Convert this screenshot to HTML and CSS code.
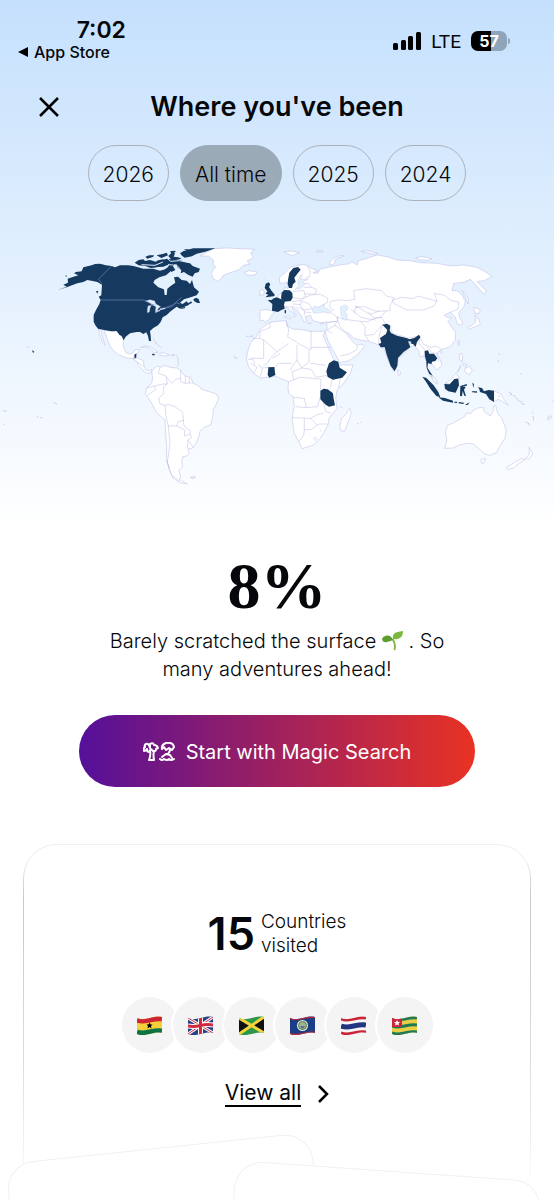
FILE: index.html
```
<!DOCTYPE html>
<html lang="en">
<head>
    <meta charset="UTF-8">
    <meta name="viewport" content="width=device-width, initial-scale=1.0">
    <title>Where you've been</title>
    <link rel="stylesheet" href="styles.css">
</head>
<body>
    <header class="hero">
        <div class="status-bar">
            <div class="status-left">
                <div class="clock">7:02</div>
                <a class="back-link" href="#">
                    <svg width="10" height="10" viewBox="0 0 10 10" aria-hidden="true"><path d="M10 0v10L0 5z"/></svg>
                    App Store
                </a>
            </div>
            <div class="status-right">
                <svg width="28" height="18" viewBox="0 0 28 18" aria-hidden="true">
                    <rect x="0" y="11" width="5" height="7" rx="1.5"/>
                    <rect x="8" y="8" width="5" height="10" rx="1.5"/>
                    <rect x="15" y="4" width="5" height="14" rx="1.5"/>
                    <rect x="23" y="0" width="5" height="18" rx="1.5"/>
                </svg>
                <span class="network">LTE</span>
                <span class="battery">57</span>
            </div>
        </div>

        <div class="title-bar">
            <button class="close" type="button" aria-label="Close">
                <svg width="20" height="20" viewBox="0 0 20 20" aria-hidden="true"><path d="M1 1l18 18M19 1L1 19"/></svg>
            </button>
            <h1>Where you've been</h1>
        </div>

        <nav class="years">
            <button class="chip" type="button">2026</button>
            <button class="chip active" type="button">All time</button>
            <button class="chip" type="button">2025</button>
            <button class="chip" type="button">2024</button>
        </nav>

        <svg class="map" viewBox="0 0 1662 810" role="img" aria-label="World map of visited countries">
            <!-- Americas -->
            <g class="land">
                <path d="M600 78L640 56 680 54 765 58 752 68 760 84 742 92 748 103 730 106 715 120 690 128 670 136 660 150 652 154 640 146 634 130 640 118 648 112 640 104 640 90 625 78z"/>
                <path d="M735 126l12-4 12 2 10 0 2 6-12 6-14 0-10-4z"/>
                <path d="M312 300L335 304 350 303 358 314 366 318 371 331 370 350 378 368 390 372 400 368 404 360 418 358 414 370 405 374 398 386 380 384 355 374 340 362 330 348 324 332z"/>
                <path d="M295 297l8 3 2 14 10 32-6-6-8-20z"/>
                <path d="M398 386L412 384 430 392 432 410 438 420 448 422 456 418 455 426 446 430 436 428 425 416 415 406 412 396z"/>
                <path d="M422 353l14-6 16 4 22 16-12 0-14-12-12-4zM480 369l14 0 14 6-12 3-16-2zM514 374h10v3h-10z"/>
                <path class="line" d="M530 376l4 10 0 8 1 8-3 8M412 396l18 14M458 325l10 10-2 8M470 340l14 14"/>
                <path d="M455 425L470 408 482 412 494 406 510 412 530 414 540 420 555 438 572 442 580 460 600 470 604 478 625 484 650 492 656 505 648 524 640 538 638 562 632 585 612 592 600 604 596 622 588 640 578 654 564 657 568 670 560 678 548 680 545 698 548 710 536 722 542 738 538 748 562 762 540 758 520 745 508 720 500 690 500 650 497 610 495 570 470 548 452 515 436 492 440 474 455 460 458 444z"/>
                <path class="line" d="M480 412l-5 18 23 8 4 24-12 8 2 20-16 14 4 18 15 4M440 474l22-6 6 10-26 18M495 526l3 34 7 28 25 0 5-13 15-4-2-24-23-17-17-6-13 2M530 588l25 12-2 18 17-6 0-10-18-14-2-18M505 588l5 52-8 58 13 37 25 20M562 656l2-26 16 22M542 420v35l13 5 25-2M556 438v22M568 442v18M498 440l17 20 12-12 15-3M570 612l5 10-11 8M500 690l8 24M462 468l28-6 12 0"/>
                <path class="faint" d="M572 742l8-2 6 2-8 4zM82 351l6 2M8 542l12 2M110 560l6 2M120 562l8 2M160 516l12 8M10 584l4 0M703 378l4 8 6-4M738 318l8 2M750 320l10-3"/>
            </g>
            <g class="visited">
                <path d="M170 181L200 170 190 164 204 158 203 146 216 142 235 136 222 130 228 126 245 124 250 112 275 106 285 102 300 101 318 106 335 108 345 112 360 106 385 106 400 108 414 112 430 116 460 116 480 122 495 118 505 110 510 95 525 100 518 112 512 124 498 136 478 142 464 150 460 158 475 172 492 178 494 195 500 195 502 176 512 168 526 158 522 142 534 140 545 150 560 152 570 162 576 150 582 172 597 185 590 196 572 202 552 208 540 218 548 222 560 214 568 224 550 232 540 236 530 230 520 238 512 244 500 255 488 262 482 276 474 286 460 294 450 303 452 318 453 333 447 333 444 318 439 307 430 312 420 306 410 306 390 310 377 320 371 331 365 318 358 314 350 303 335 304 312 300 294 296 286 286 281 275 281 255 288 240 298 222 302 210 296 200 304 196 306 164 292 156 278 153 262 150 250 156 232 160 200 172z"/>
                <path d="M528 96l18-4 14 6 10 2 8 8 22 8-4 10-12 4-6 10-14-6-12-8-10 4 2-10-12-8zM404 98l12-8 14-2 6 6 14-2 6 10 16 2-2 8-18 2-16-6-20-2zM436 80l12-4 14 0-2 4-18 6zM470 92l18-4 12 4-4 10-18 4-10-8zM470 76l18-4 12-4 4 8-20 8zM505 78l12-12 8 4-4 10 14 2 10 4-28 6zM510 64l14-2 4 4-14 4zM540 70l12-8 28-7 66 0-30 10-26 6-14 8-22 4-8-6zM552 58h20l-10 6zM506 108l14 2 6 10-12 6zM580 208l8-5 8 4 4 12-8 0-10-6zM560 222l14-8 2 5-14 6zM544 234l12-4-2 5-10 2zM288 184l7-2-3 9zM196 136l6 2-4 2zM96 360l7 5-4 4zM403 374l6-4 0 12-5 4zM456 371l8 1 0 4-7 0z"/>
                <path d="M420 96l30-6 20 6 30-10 40 4 20 10-20 4-30-2-20 8-30 2-26-6z"/>
            </g>
            <path class="water" d="M436 213l14-4 14 4 4 10-12 2-6-6zM444 228l10-2-4 8-2 12-6 2 0-8zM456 224l12-2 14 8-6 4-6 10-4-2 2-12zM466 244l14-5 0 3-14 6zM480 236l16-3 0 3-16 4z"/>
            <path class="channel" d="M425 104l40 2 24-10M500 84l12 10 26-2 20 4M504 104l26 2 10 10"/>
            <path class="border" d="M302 210H432L446 218 462 226M496 234L515 230 528 218 540 222M335 108L295 148 306 160M496 233L520 224 545 202"/>

            <!-- Europe, Africa, Asia, Oceania -->
            <g transform="translate(831 0)">
                <g class="land">
                    <path d="M18 238L28 230 38 240 52 252 50 262 58 256 46 238 48 230 66 248 74 258 80 276 90 272 84 260 100 256 108 272 130 278 150 276 150 300 145 308 152 330 165 355 178 378 188 398 215 392 240 375 262 350 255 342 245 344 238 346 225 332 210 314 205 305 218 312 230 325 250 330 275 334 298 342 310 348 322 358 335 395 350 425 362 400 365 385 390 362 398 350 412 346 425 362 430 382 442 376 448 395 452 420 468 440 480 458 472 455 455 428 450 410 453 398 465 402 480 420 495 405 488 385 478 370 495 358 520 350 535 330 536 308 520 285 512 275 525 264 510 262 502 256 520 246 535 262 540 280 550 285 558 280 548 262 545 248 560 232 565 215 555 195 540 182 525 182 530 160 560 157 580 148 590 158 605 175 622 194 628 182 610 165 600 155 620 152 645 140 625 125 600 112 560 105 520 108 480 100 430 98 400 92 360 90 330 80 300 75 270 85 245 92 240 105 225 95 215 102 200 103 160 110 130 117 122 130 108 128 124 122 100 114 95 108 80 104 60 106 40 112 20 132 7 142 8 158 20 160 30 155 34 174 30 176 24 170 20 182 5 196 0 215z"/>
                    <path d="M-51 241L-30 239-14 243-8 248-18 256-20 266-35 276-42 270-51 272z"/>
                    <path d="M-52 182l8-4 6 8-2 8-12 2z"/>
                    <path d="M-23 278L0 274 28 272 30 288 50 298 70 298 100 304 145 304 138 316 155 355 168 385 185 405 228 405 220 430 200 460 180 480 176 505 180 535 170 548 155 565 155 580 145 600 130 625 110 645 75 656 65 635 52 610 45 565 52 530 48 500 35 490 33 470 35 455 10 445-5 438-30 442-50 444-70 430-85 410-92 388-88 365-80 340-62 320-50 298z"/>
                    <path d="M218 535l5 14-14 40-6 14-11 0-4-16 6-22 12-12z"/>
                    <path d="M503 655L510 630 505 605 512 586 530 578 548 568 562 560 570 548 580 552 590 540 602 534 618 532 622 545 640 558 648 545 650 528 656 526 662 550 675 566 688 600 684 624 670 646 658 668 640 676 622 672 610 660 604 654 598 650 590 642 570 640 550 644 528 654z"/>
                    <path d="M612 688l14-2-5 12-8 2zM756 652l6 10 6 10-14 16-7-4 10-12zM688 712l26-16 20-10 12 2-20 12-16 14-18 4z"/>
                    <path d="M650 482l22 10 6 12 16 22-22-14-8-4-14 7zM504 460l18-12 14-18 12 14-16 4-12 14zM462 438l12 6 8 18-10-6zM548 372l7-2 2 14-2 12-7-8zM556 400l14 4-4 8zM562 418l16-10 8 14-8 12-12-6zM540 428l12-22-8 18z"/>
                    <path d="M590 232l8 2 12 6-4 10-12 0zM594 254l8 10 8 16-8 8-14 4-12 6-4-6 14-6 10-10zM555 182l12 12 8 16-2 12-8-20zM542 334l5-2-2 14zM362 420l8 4 0 10-6 2zM487 364l8-2-1 8z"/>
                    <path d="M20 66l22-3 26 5-22 9zM118 63h20v3h-20zM158 104q-2-20 36-28l8 2q-38 10-28 20l-6 6zM252 64l20-2 30 8-12 3zM415 84l20-4 30 6-12 5-28-2zM22 261l10 4 10 0-6-7zM90 280h14M128 282l14-3"/>
                    <path class="line" d="M92 108l8 18-2 14-14 5M60 106l10 12M48 185l32-4 6 18-14 8-24-4M80 162l14-2 10 12 14 6-2 14-34 0M80 172l24 0M74 209l26-14 30-2 22 12 0 12-26 14M72 214l22 6 12 16-26 4-10-12zM44 215l30-4M48 222l22 2M66 232l16 10 0 14M56 230l10 10M84 246l18 2M22 218l-4 8 14 6 16-2"/>
                    <path class="line" d="M172 242l-14-10 2-18 24-4 26 2 24-4-4-26 38-6 46 6 14 16 24 6-14 24 2 14-36 2-14-2-26-12-28 2-4 18M345 210l30-8 34 4 14-8 50 14 7 2-10 14-30 12-50 0-40-20zM480 214l-8-24 30 6 20 16 24 4-4 22-20 8M328 242l-16 18 14 22 14 8 6 20 48 14 34-6 10 24 24 10 14-4 19 10M180 262l24 6 46 6 14 16 0 24 12 20M180 262l8 26 16 18M250 274l20 2 22-10 22-4M318 282l-16 18-12 14-24 2M222 238l30 24 18 4 26 4M240 230l40 24 28-12M318 284l-10 26-4 34M150 300l24-14 30 22M152 302l14 8M190 378l26-6 22-12 4-12M150 278l30-4-8 14M428 320l-2 20 18 20-2 16M452 352l12 16 14 2 8 24M276 246l12 18 24-2M164 248l14 12 8 2M152 276l30-2-2-12"/>
                    <path class="line" d="M28 274l7 26-3 20 38 24 32 16V302M102 352h58M-23 278l3 14-30 12-2 21 12 5 40 35 34-24M-40 330v55l-40 0M-52 325h-22M0 365l-20 20-10 16-12 6M60 344v46l-8 10-12 20M-5 412l8-12 42 0M-14 386l24-16M60 390l14 24-30 12M96 360v36l-22 18 28 4M100 400l46 6M102 418l16 24 32-6M45 425l5 25-15 5M50 450l16-8 44 3 22 3-2 32M48 502l34 3 6 28-32-3M130 500l-8 30-34 3M45 563l56 2 18-10 20-6M82 565v35l-2 15-14 20M80 600l24-2 22-16 26 0M100 565l20 20M165 448l-5 28M190 445l-6 30M138 515l8 30 16 4M-70 430l10-18-18-12M-50 440l6-26 20-2M-88 388h16l6 16M-44 414l-14-10M110 626l4-4 6 4-6 6zM128 600l6 4"/>
                    <path class="faint" d="M670 500l-8-2M695 486l10 6-6 4M708 495l8 6M716 504l8 5M722 512l14 4M732 520l12 4M765 545l4 6M768 558l2 14M745 575l14 8-4 3M810 565l10-8 4 4-8 8zM826 514h4M730 430l4 2M664 372l6 0M664 390v6M190 530l6 4M240 580l5 2M250 578l4-2M-38 144l2 0"/>
                </g>
                <path class="water" d="M106 240l6-12 16 4 6-6 10-2-4 6 24 14-4 6-22-4-18 4-12-2zM190 232l14-8 10 8-4 8-8 4 8 10 0 16-10 0-8-14zM58 174l8-8-4-10 8-20 6-2-4 14 22 0-14 6 2 10-12 12-16 2zM234 228l8 0-2 6z"/>
                <g class="visited">
                    <path d="M-34 161l9-4 5 6-4 8 8 12 10 12-4 4-25 3 9-8-8-3 5-7-8-10zM-28 210l12 0 4-4 10-4 12 4 14 6-3 12 2 12-10 4-10 6-18-4 1-20zM14 188l8-8 16 1 8 8 1 14-6 10-20 2-9-10zM33 150l4-22 12-14 14-3 8 8-10 12-9 12 4 12-8 8-3 11-9 0-4-12zM23 240h4v10h-4z"/>
                    <path d="M-26 412l18-1 3 24-18 8-5-8zM148 424l8-24 14-9 14 4 4 18 22 14-14 16-28 6-16-8zM130 482l10-6 12 2 16 12 2 16 4 20-18 4-10-6-16-16z"/>
                    <path d="M316 284l14-3 10 6-2 14 4 8 18 8 28 7 10 4 14-4 14-10 4 8-10 14-4 14-8-8-12-2 4 12-20 14-17 18-2 24-8 16-12-16-12-34-6-22-12 0-6-10 8-4-4-14 18-12 4-12z"/>
                    <path d="M443 363l10-2 4 10 14 0 10 14-6 8-10 2-2 8-10-4-2 14 16 24-10-5-8-18-1-20-4-14zM436 440l12 4 22 22 14 20 6 16-12-4-18-22-14-22zM484 502l20 2 24 8 0 6-30-6zM532 515l8 0 0 4-8-1zM545 516l16 2-2 4-14-2zM564 524l14-7-6 8zM502 462l16 1 14-16 12-1 2 20-10 22-22-4-10-8zM550 468l20-6-1 5-13 4 10 0-5 8 6 20-5-2-5-14-2 16-6-2zM586 458l5 4-2 12zM584 484h16v4l-14-1zM603 472l12 2 6 10 14-4 16 2 0 34-14-8-10-16-18-6-2-8z"/>
                </g>
                <path class="water" d="M394 334l8 1 0 8-6-2z"/>
            </g>
        </svg>
    </header>

    <main>
        <section class="score">
            <p class="percent">8%</p>
            <p class="message">Barely scratched the surface
                <svg width="21" height="20" viewBox="0 0 21 20" role="img" aria-label="seedling">
                    <path d="M10.500 8Q14 13 12.500 19" fill="none" stroke="#7db343" stroke-width="1.800"/>
                    <path d="M11 9Q9 4 5 4.500 1 5 0 8q1 4 5 3 4-1 6-2z" fill="#5b9e2d"/>
                    <path d="M11 8Q10 3 14 1.500 18 0 21 0q0 5-3 7-3 2-7 1z" fill="#7cb83b"/>
                </svg>
                . So many adventures ahead!</p>
            <button class="cta" type="button">
                <svg width="32" height="20" viewBox="0 0 32 20" aria-hidden="true">
                    <path d="M7 6Q6 1 3 2 1 3 2 5q-2 1-1 4 2 0 3-2 0 3 2 3l2-3 2 2q3 1 3-2l2-1q-1-3-4-3Q10 0 7 2v4M7 9q1 4-1 9h5q-1-5 0-9"/>
                    <path d="M19 7q-1-4 4-6 7-1 8 4l-2 3-3-2-3 2-2-3zM27 7q0 3-2 5M19 15l4-3 4 1 2 3M17 17q2 2 4 0 3 2 5 0 2 2 5 0"/>
                </svg>
                Start with Magic Search
            </button>
        </section>

        <section class="summary">
            <h2 class="total">
                <span class="count">15</span>
                <span class="count-label">Countries visited</span>
            </h2>
            <ul class="flags">
                <li><svg viewBox="0 0 25 19" role="img" aria-label="Ghana">
                    <defs>
                        <clipPath id="wave"><path d="M0 2c5 2 8 1 12.500 0s8-2 12.500-1v16c-4.500-1-8 0-12.500 1s-7.500 2-12.500 0z"/></clipPath>
                    </defs>
                    <g clip-path="url(#wave)">
                        <path d="M0 0h25v19H0z" fill="#f3cf3c"/>
                        <path class="band" stroke="#cf2433" d="M0 4c5 2 8 1 12.500 0s8-2 12.500-1"/>
                        <path class="band" stroke="#0d7340" d="M0 16c5 2 8 1 12.500 0s8-2 12.500-1"/>
                        <path d="M12.500 6.500l1 2h2l-1.500 1.500.5 2.500-2-1.500-2 1.500.5-2.500L9.500 8.500h2z"/>
                    </g>
                </svg></li>
                <li><svg viewBox="0 0 25 19" role="img" aria-label="United Kingdom">
                    <g clip-path="url(#wave)">
                        <path d="M0 0h25v19H0z" fill="#2b3f83"/>
                        <path d="M0 2l25 15M0 18L25 1" stroke="#fff" stroke-width="3"/>
                        <path d="M0 2l25 15M0 18L25 1" stroke="#cf2a3f" stroke-width="1"/>
                        <path d="M12.500 0v19M0 10q6 1 12.500-.5T25 9" fill="none" stroke="#fff" stroke-width="5"/>
                        <path d="M12.500 0v19M0 10q6 1 12.500-.5T25 9" fill="none" stroke="#cf2a3f" stroke-width="3"/>
                    </g>
                </svg></li>
                <li><svg viewBox="0 0 25 19" role="img" aria-label="Jamaica">
                    <g clip-path="url(#wave)">
                        <path d="M0 0h25v19H0z" fill="#2d9647"/>
                        <path d="M0 2l11.500 7.500L0 18zM25 1L13.500 9.500 25 17z" fill="#111"/>
                        <path d="M0 2l25 15M0 18L25 1" stroke="#f1d43c" stroke-width="3"/>
                    </g>
                </svg></li>
                <li><svg viewBox="0 0 25 19" role="img" aria-label="Belize">
                    <g clip-path="url(#wave)">
                        <path d="M0 0h25v19H0z" fill="#193d86"/>
                        <path d="M0 2.500c5 2 8 1 12.500 0s8-2 12.500-1M0 17.500c5 2 8 1 12.500 0s8-2 12.500-1" fill="none" stroke="#b02a3d" stroke-width="1.500"/>
                        <circle cx="12.500" cy="9.500" r="5.500" fill="#e8ecd9"/>
                        <circle cx="12.500" cy="9.500" r="4" fill="#a3b48a" stroke="#4e7c4b"/>
                        <path d="M10 10h5l-2.500 3z" fill="#496f9c"/>
                    </g>
                </svg></li>
                <li><svg viewBox="0 0 25 19" role="img" aria-label="Thailand">
                    <g clip-path="url(#wave)">
                        <path d="M0 0h25v19H0z" fill="#f6f6f8"/>
                        <path d="M0 3c5 2 8 1 12.500 0s8-2 12.500-1M0 17c5 2 8 1 12.500 0s8-2 12.500-1" fill="none" stroke="#cc2436" stroke-width="3"/>
                        <path class="band" stroke="#22357f" d="M0 10c5 2 8 1 12.500 0s8-2 12.500-1"/>
                    </g>
                </svg></li>
                <li><svg viewBox="0 0 25 19" role="img" aria-label="Togo">
                    <g clip-path="url(#wave)">
                        <path d="M0 0h25v19H0z" fill="#e9cf45"/>
                        <path d="M0 3c5 2 8 1 12.500 0s8-2 12.500-1M0 10c5 2 8 1 12.500 0s8-2 12.500-1M0 17c5 2 8 1 12.500 0s8-2 12.500-1" fill="none" stroke="#1d7a55" stroke-width="3"/>
                        <path d="M0 0h10v11H0z" fill="#cd2540"/>
                        <path d="M5 4l1 2h2L6.500 7.500 7 9.500l-2-1-2 1 .5-2L2 6h2z" fill="#fff"/>
                    </g>
                </svg></li>
            </ul>
            <a class="view-all" href="#">
                <span>View all</span>
                <svg width="12" height="20" viewBox="0 0 12 20" aria-hidden="true"><path d="M2 2l8 8-8 8"/></svg>
            </a>
        </section>

        <section class="teasers">
            <div class="teaser teaser-left"></div>
            <div class="teaser teaser-right"></div>
        </section>
    </main>
</body>
</html>
```
FILE: styles.css
```
:root {
    --ink: #05070a;
    --visited: #15395f;
    --sky: #c5e0fd;
    --chip-border: #adb2b9;
}

* {
    box-sizing: border-box;
}

body {
    margin: 0;
    background: #fff;
    color: var(--ink);
    font-family: Inter, "Liberation Sans", sans-serif;
    font-size: 20px;
    font-weight: 300;
}

button {
    font: inherit;
    color: inherit;
    cursor: pointer;
}

h1, h2, p, ul {
    margin: 0;
    padding: 0;
}

a {
    color: inherit;
}

.hero {
    background: linear-gradient(var(--sky), #fff);
    padding: 18px 0 30px;
}

.status-bar {
    display: flex;
    justify-content: space-between;
    padding: 0 47px 0 18px;
}

.status-left {
    display: flex;
    flex-direction: column;
}

.clock {
    font-size: 23px;
    font-weight: 600;
    line-height: 24px;
    text-align: right;
    margin-right: -16px;
}

.back-link {
    display: flex;
    align-items: center;
    gap: 6px;
    font-size: 16px;
    font-weight: 500;
    line-height: 20px;
    text-decoration: none;
}

.status-right {
    display: flex;
    align-items: center;
    gap: 10px;
    height: 46px;
}

.network {
    font-size: 19px;
    font-weight: 400;
    font-family: Roboto, sans-serif;
}

.battery {
    position: relative;
    width: 36px;
    border-radius: 7px;
    background: linear-gradient(90deg, #000 56%, #8fa4b8 56%);
    color: #fff;
    font-size: 16px;
    font-weight: 700;
    line-height: 20px;
    text-align: center;
}

.battery::after {
    content: "";
    position: absolute;
    right: -3px;
    top: 7px;
    width: 2px;
    height: 6px;
    border-radius: 0 2px 2px 0;
    background: #8fa4b8;
}

.title-bar {
    display: grid;
    grid-template-columns: 20px 1fr 20px;
    align-items: center;
    padding: 0 39px;
    margin-top: 25px;
}

.close {
    display: flex;
    padding: 0;
    border: 0;
    background: none;
}

.close path,
.view-all path {
    fill: none;
    stroke: #000;
    stroke-width: 2.500;
}

h1 {
    font-size: 27px;
    font-weight: 600;
    line-height: 36px;
    text-align: center;
}

.years {
    display: flex;
    justify-content: center;
    gap: 11px;
    margin-top: 20px;
}

.chip {
    height: 56px;
    padding: 2px 14px 0;
    border: 1px solid var(--chip-border);
    border-radius: 28px;
    background: none;
    font-size: 21px;
}

.chip.active {
    background: #9baab7;
    border-color: #9baab7;
}

.map {
    display: block;
    width: 100%;
    margin-top: 29px;
}

.land path {
    fill: #fff;
    stroke: #b9b9e4;
    stroke-width: 1.500;
}

.land .line {
    fill: none;
}

.land .faint {
    fill: none;
    stroke: #a9a9dc;
}

.visited path {
    fill: var(--visited);
}

.water {
    fill: #e2f0fe;
    stroke: #b9b9e4;
}

.channel {
    fill: none;
    stroke: #dcedfe;
    stroke-width: 3;
}

.border {
    fill: none;
    stroke: #6f87bd;
    stroke-width: 2;
}

.score {
    display: flex;
    flex-direction: column;
    align-items: center;
    padding: 16px 79px 0;
}

.percent {
    font-family: "Liberation Serif", serif;
    font-size: 66px;
    font-weight: 700;
    line-height: 80px;
}

.message {
    max-width: 350px;
    padding-top: 1px;
    line-height: 28px;
    text-align: center;
}

.message svg {
    vertical-align: -3px;
}

.cta {
    display: flex;
    align-items: center;
    justify-content: center;
    gap: 11px;
    width: 100%;
    height: 72px;
    margin-top: 32px;
    padding: 2px 0 0;
    border: 0;
    border-radius: 36px;
    background: linear-gradient(90deg, #55109a, #e93223);
    color: #fff;
    font-weight: 400;
}

.cta path {
    fill: none;
    stroke: #fff;
    stroke-width: 2;
    stroke-linejoin: round;
    stroke-linecap: round;
}

.summary {
    display: flex;
    flex-direction: column;
    align-items: center;
    margin: 57px 23px 0;
    padding: 65px 20px 92px;
    border: 1px solid transparent;
    border-radius: 34px;
    background:
        linear-gradient(#fff, #fff) padding-box,
        linear-gradient(#f0f0f0 4%, #c8c8c8 15%, #dcdcdc 60%, #fff) border-box;
}

.total {
    display: flex;
    align-items: center;
    gap: 6px;
    font-weight: 300;
}

.count {
    font-size: 45px;
    font-weight: 600;
    line-height: 48px;
}

.count-label {
    width: min-content;
    font-size: 19px;
    line-height: 24px;
}

.flags {
    display: flex;
    margin-top: 39px;
    list-style: none;
}

.flags li {
    display: flex;
    align-items: center;
    justify-content: center;
    width: 56px;
    height: 56px;
    border-radius: 50%;
    background: #f4f4f4;
    box-shadow: 0 0 0 2px #fff;
}

.flags li + li {
    margin-left: -5px;
}

.flags svg {
    width: 25px;
    height: 19px;
}

.band {
    fill: none;
    stroke-width: 5;
}

.view-all {
    display: flex;
    align-items: center;
    gap: 16px;
    margin-top: 28px;
    font-size: 21px;
    font-weight: 400;
    line-height: 24px;
    text-decoration: none;
}

.view-all span {
    border-bottom: 2px solid #000;
}

.teasers {
    position: relative;
    display: flex;
    height: 72px;
    margin-top: -72px;
    padding: 32px 0 0 5px;
    overflow: hidden;
}

.teaser {
    flex: 0 0 56%;
    height: 300px;
    border: 1px solid #f1f1f1;
    border-radius: 28px;
    background: #fff;
    transform-origin: top left;
}

.teaser-left {
    margin-top: 4px;
    transform: rotate(-6deg);
}

.teaser-right {
    margin-left: -76px;
    transform: rotate(4deg);
}
```
